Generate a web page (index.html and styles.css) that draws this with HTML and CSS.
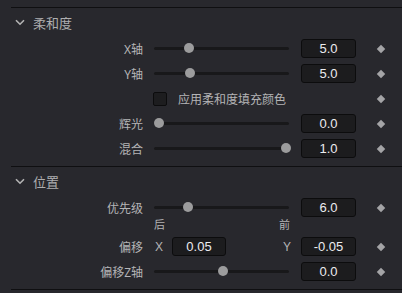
FILE: index.html
```html
<!DOCTYPE html>
<html>
<head>
<meta charset="utf-8">
<link rel="stylesheet" href="styles.css">
</head>
<body>
<div class="panel">
  <section class="section">
    <div class="header">
      <svg class="chev" width="10" height="7" viewBox="0 0 10 7"><path d="M1 1.2 L5 5.2 L9 1.2" fill="none" stroke="#b4b4b4" stroke-width="1.6"/></svg>
      <span class="title">柔和度</span>
    </div>
    <div class="row">
      <span class="label">X轴</span>
      <div class="ctrl"><div class="track"><span class="thumb" style="left:30px"></span></div></div>
      <div class="box">5.0</div>
      <span class="key"></span>
    </div>
    <div class="row">
      <span class="label">Y轴</span>
      <div class="ctrl"><div class="track"><span class="thumb" style="left:31px"></span></div></div>
      <div class="box">5.0</div>
      <span class="key"></span>
    </div>
    <div class="row">
      <span class="label"></span>
      <div class="ctrl wide"><span class="check"></span><span class="checklabel">应用柔和度填充颜色</span></div>
      <span class="key"></span>
    </div>
    <div class="row">
      <span class="label">辉光</span>
      <div class="ctrl"><div class="track"><span class="thumb" style="left:0px"></span></div></div>
      <div class="box">0.0</div>
      <span class="key"></span>
    </div>
    <div class="row">
      <span class="label">混合</span>
      <div class="ctrl"><div class="track"><span class="thumb" style="left:127px"></span></div></div>
      <div class="box">1.0</div>
      <span class="key"></span>
    </div>
  </section>
  <section class="section">
    <div class="header">
      <svg class="chev" width="10" height="7" viewBox="0 0 10 7"><path d="M1 1.2 L5 5.2 L9 1.2" fill="none" stroke="#b4b4b4" stroke-width="1.6"/></svg>
      <span class="title">位置</span>
    </div>
    <div class="row">
      <span class="label">优先级</span>
      <div class="ctrl"><div class="track"><span class="thumb" style="left:29px"></span></div></div>
      <div class="box">6.0</div>
      <span class="key"></span>
    </div>
    <div class="row ends">
      <span class="label"></span>
      <div class="ctrl endlabels"><span>后</span><span>前</span></div>
    </div>
    <div class="row offset">
      <span class="label">偏移</span>
      <div class="ctrl xy"><span class="axis">X</span><div class="box small">0.05</div><span class="axis y">Y</span></div>
      <div class="box">-0.05</div>
      <span class="key"></span>
    </div>
    <div class="row">
      <span class="label">偏移Z轴</span>
      <div class="ctrl"><div class="track"><span class="thumb" style="left:64px"></span></div></div>
      <div class="box">0.0</div>
      <span class="key"></span>
    </div>
  </section>
</div>
</body>
</html>
```
FILE: styles.css
```css
html, body {
  margin: 0;
  padding: 0;
  background: #28282d;
}
body {
  font-family: "Noto Sans", "Noto Sans CJK SC", sans-serif;
  color: #b4b4b6;
  font-size: 12px;
  width: 402px;
  height: 293px;
  overflow: hidden;
}
.panel {
  padding-top: 7px;
}
.section {
  margin-left: 11px;
  border-top: 1px solid #0f0f11;
  padding-bottom: 5px;
}
.section:last-child {
  border-bottom: 1px solid #0f0f11;
}
.header {
  height: 28px;
  display: flex;
  align-items: center;
  padding-left: 4px;
}
.chev {
  display: block;
  margin-right: 8px;
}
.title {
  font-size: 13px;
  color: #aeaeb0;
}
.row {
  height: 25px;
  display: grid;
  grid-template-columns: 132px 147px 55px 1fr;
  align-items: center;
  margin-left: -11px;
}
.label {
  text-align: right;
  padding-right: 0;
  width: 143px;
  box-sizing: border-box;
  white-space: nowrap;
}
.row .label {
  margin-left: 0;
}
.row {
  grid-template-columns: 143px 158px 55px 1fr;
}
.ctrl {
  padding-left: 11px;
  padding-right: 12px;
  display: flex;
  align-items: center;
}
.track {
  position: relative;
  width: 135px;
  height: 3px;
  background: #18181a;
  border-radius: 2px;
}
.thumb {
  position: absolute;
  top: -4px;
  width: 10px;
  height: 10px;
  border-radius: 50%;
  background: #9c9c9d;
}
.box {
  height: 19px;
  box-sizing: border-box;
  background: #1c1c1e;
  border: 1px solid #0c0c0d;
  border-radius: 3px;
  color: #ececf0;
  font-size: 13px;
  font-family: "Liberation Sans", "Noto Sans", sans-serif;
  display: flex;
  align-items: center;
  justify-content: center;
  line-height: 1;
}
.key {
  justify-self: start;
  margin-left: 22px;
  width: 6px;
  height: 6px;
  background: #a4a4a6;
  transform: rotate(45deg);
}
.check {
  width: 14px;
  height: 14px;
  box-sizing: border-box;
  background: #1d1d1f;
  border: 1px solid #0c0c0d;
  border-radius: 2px;
  margin-left: -1px;
}
.checklabel {
  margin-left: 11px;
  white-space: nowrap;
}
.wide {
  grid-column: 2 / 4;
}
.ends {
  height: 14px;
  margin-top: -4px;
}
.endlabels {
  justify-content: space-between;
  width: 136px;
  padding-right: 0;
  font-size: 11px;
}
.offset {
  margin-top: 4px;
}
.xy {
  padding-right: 10px;
}
.axis {
  font-family: "Liberation Sans", "Noto Sans", sans-serif;
  font-size: 12px;
  width: 17px;
  padding-left: 1px;
}
.box.small {
  width: 54px;
}
.axis.y {
  margin-left: auto;
  width: auto;
}
```
